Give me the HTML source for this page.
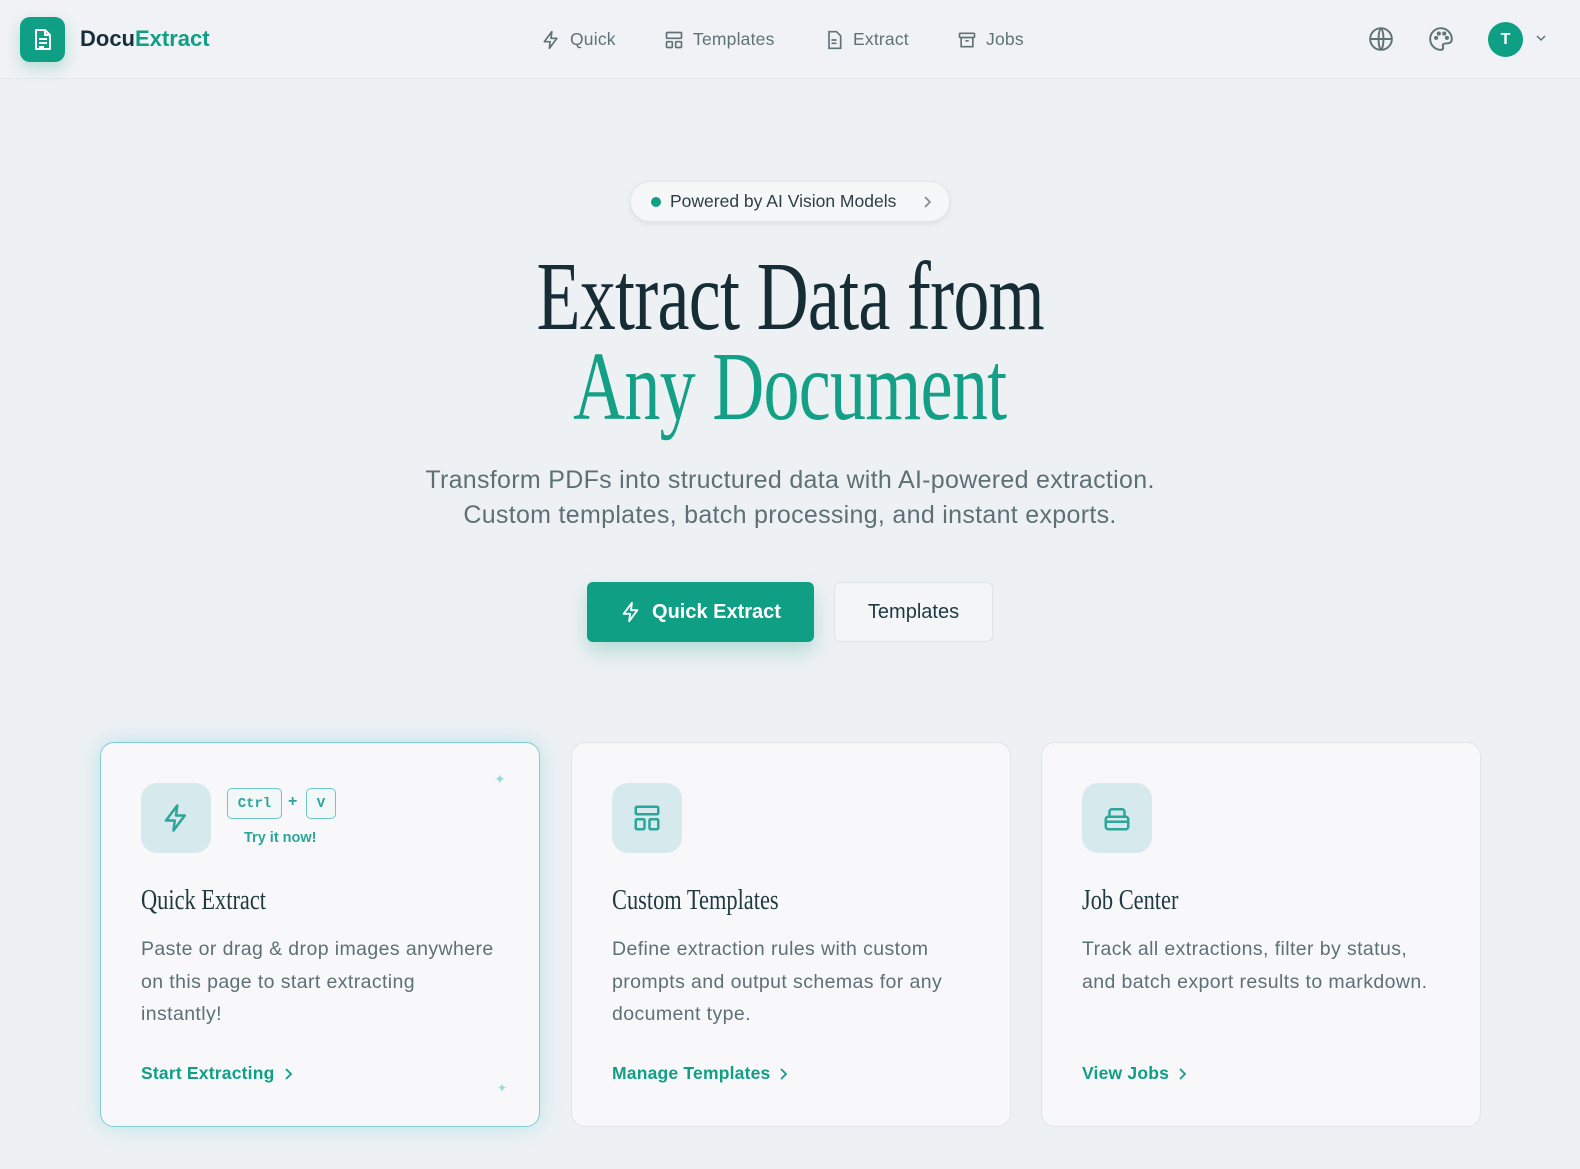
<!DOCTYPE html>
<html><head><meta charset="utf-8"><style>
*{box-sizing:border-box;margin:0;padding:0}
body{width:1580px;height:1169px;overflow:hidden;background:#eef1f4;font-family:"Liberation Sans",sans-serif;color:#1e3a40;position:relative}
.nav{position:absolute;left:0;top:0;width:1580px;height:79px;border-bottom:1px solid #e2e8eb;background:#f0f2f5}
.logo{position:absolute;left:20px;top:17px;width:45px;height:45px;border-radius:10px;background:#0f9f85;box-shadow:0 6px 14px rgba(15,159,133,.25)}
.brand{position:absolute;left:80px;top:26px;font-size:22px;font-weight:bold;color:#173039}
.brand span{color:#0f9f85}
.nl{position:absolute;top:29px;font-size:17.5px;color:#5f7377;display:flex;align-items:center;gap:9px;letter-spacing:.2px}
svg{display:block}
.pill{position:absolute;left:630px;top:181px;width:320px;height:41px;border-radius:21px;background:#f6f7f9;box-shadow:0 2px 6px rgba(0,0,0,.08);border:1px solid #e3e7ea;font-size:17.5px;color:#2c3e44}
.h{position:absolute;left:0;width:1580px;text-align:center;font-family:"Liberation Serif",serif;font-size:98px;line-height:1}
.h span{display:inline-block;transform:scaleX(.735);letter-spacing:-1px}
.sub{position:absolute;left:0;top:463px;width:1580px;text-align:center;font-size:25px;line-height:35px;color:#5d7075;letter-spacing:.3px}
.btn1{position:absolute;left:587px;top:582px;width:227px;height:60px;background:#0f9f85;border-radius:6px;color:#fff;font-size:20px;font-weight:bold;display:flex;align-items:center;justify-content:center;gap:10px;box-shadow:0 10px 20px rgba(15,159,133,.25)}
.btn2{position:absolute;left:834px;top:582px;width:159px;height:60px;background:#f3f5f7;border:1px solid #dde3e6;border-radius:6px;font-size:20px;color:#1e3a40;display:flex;align-items:center;justify-content:center}
.card{position:absolute;top:742px;width:440px;height:385px;background:#f8f8fb;border:1px solid #e0e5e8;border-radius:14px}
.card.a{border-color:#7fcfd3;box-shadow:0 0 22px rgba(90,200,210,.35)}
.ic{position:absolute;left:40px;top:40px;width:70px;height:70px;border-radius:16px;background:#d6e9ec;display:flex;align-items:center;justify-content:center}
.ct{position:absolute;left:40px;top:142px;font-family:"Liberation Serif",serif;font-size:28px;color:#1e3a40}
.ct span{display:inline-block;transform:scaleX(.8);transform-origin:left}
.cd{position:absolute;left:40px;top:190px;width:360px;font-size:19.5px;line-height:32.5px;color:#5d7075;letter-spacing:.4px}
.cl{position:absolute;left:40px;top:320px;font-size:17.5px;font-weight:bold;color:#0f9f85;display:flex;align-items:center;gap:8px;letter-spacing:.2px}
.kb{position:absolute;top:45px;height:31px;border:1px solid #6fc7c9;border-radius:5px;font-family:"Liberation Mono",monospace;font-size:14px;font-weight:bold;color:#2ca59a;display:flex;align-items:center;justify-content:center;background:#f2f7f8}
</style></head><body>
<div class="nav">
 <div class="logo"><svg width="45" height="45" viewBox="0 0 45 45" fill="none" stroke="#fff" stroke-width="2" stroke-linejoin="round"><path d="M16 13h9l5 5v14h-14z"/><path d="M25 13v5h5M19 22h8M19 26h8M19 30h5"/></svg></div>
 <div class="brand">Docu<span>Extract</span></div>
 <div class="nl" style="left:541px"><svg width="20" height="20" viewBox="0 0 24 24" fill="none" stroke="#5f7377" stroke-width="2" stroke-linejoin="round"><path d="M13 2L4 14h7l-1 8 9-12h-7z"/></svg>Quick</div>
 <div class="nl" style="left:664px"><svg width="20" height="20" viewBox="0 0 24 24" fill="none" stroke="#5f7377" stroke-width="2"><rect x="3" y="3" width="18" height="7" rx="1"/><rect x="3" y="14" width="7" height="7" rx="1"/><rect x="14" y="14" width="7" height="7" rx="1"/></svg>Templates</div>
 <div class="nl" style="left:824px"><svg width="20" height="20" viewBox="0 0 24 24" fill="none" stroke="#5f7377" stroke-width="2"><path d="M6 2h9l5 5v15H6z"/><path d="M9 12h6M9 16h6"/></svg>Extract</div>
 <div class="nl" style="left:957px"><svg width="20" height="20" viewBox="0 0 24 24" fill="none" stroke="#5f7377" stroke-width="2"><rect x="3" y="4" width="18" height="5" rx="1"/><path d="M5 9v11h14V9M10 13h4"/></svg>Jobs</div>
 <svg style="position:absolute;left:1368px;top:26px" width="26" height="26" viewBox="0 0 24 24" fill="none" stroke="#5f7377" stroke-width="1.8"><circle cx="12" cy="12" r="10"/><path d="M2 12h20M12 2c3 3 3 17 0 20M12 2c-3 3-3 17 0 20"/></svg>
 <svg style="position:absolute;left:1428px;top:26px" width="26" height="26" viewBox="0 0 24 24" fill="none" stroke="#5f7377" stroke-width="1.8"><path d="M12 2a10 10 0 1 0 0 20c1.5 0 2-1 2-2s-1-2 0-3 2-1 4-1 4-1 4-4c0-5-4.5-10-10-10z"/><circle cx="7.5" cy="11" r="1"/><circle cx="10" cy="7" r="1"/><circle cx="15" cy="7" r="1"/><circle cx="17.5" cy="11" r="1"/></svg>
 <div style="position:absolute;left:1488px;top:22px;width:35px;height:35px;border-radius:50%;background:#0f9f85;color:#fff;font-weight:bold;font-size:16px;display:flex;align-items:center;justify-content:center">T</div>
 <svg style="position:absolute;left:1534px;top:33px" width="14" height="10" viewBox="0 0 14 10" fill="none" stroke="#5f7377" stroke-width="1.5"><path d="M3 3l4 4 4-4"/></svg>
</div>
<div class="pill"><div style="position:absolute;left:20px;top:15px;width:10px;height:10px;border-radius:50%;background:#0f9f85"></div><div style="position:absolute;left:39px;top:9px">Powered by AI Vision Models</div><svg style="position:absolute;left:291px;top:12px" width="12" height="16" viewBox="0 0 12 16" fill="none" stroke="#7a8a8e" stroke-width="1.6"><path d="M3 3l5 5-5 5"/></svg></div>
<div class="h" style="top:248px;color:#172d36"><span>Extract Data from</span></div>
<div class="h" style="top:338px;color:#13a086"><span>Any Document</span></div>
<div class="sub">Transform PDFs into structured data with AI-powered extraction.<br>Custom templates, batch processing, and instant exports.</div>
<div class="btn1"><svg width="22" height="22" viewBox="0 0 24 24" fill="none" stroke="#fff" stroke-width="2" stroke-linejoin="round"><path d="M13 2L4 14h7l-1 8 9-12h-7z"/></svg>Quick Extract</div>
<div class="btn2">Templates</div>

<div class="card a" style="left:100px">
 <div class="ic"><svg width="30" height="30" viewBox="0 0 24 24" fill="none" stroke="#2ca59a" stroke-width="2" stroke-linejoin="round"><path d="M13 2L4 14h7l-1 8 9-12h-7z"/></svg></div>
 <div class="kb" style="left:126px;width:55px">Ctrl</div>
 <div style="position:absolute;left:187px;top:50px;font-weight:bold;color:#2ca59a;font-size:16px">+</div>
 <div class="kb" style="left:205px;width:30px">V</div>
 <div style="position:absolute;left:143px;top:87px;font-size:14.5px;font-weight:bold;color:#2ca59a">Try it now!</div>
 <div style="position:absolute;left:393px;top:28px;color:#9ad8da;font-size:14px">✦</div>
 <div style="position:absolute;left:396px;top:338px;color:#9ad8da;font-size:12px">✦</div>
 <div class="ct"><span>Quick Extract</span></div>
 <div class="cd">Paste or drag &amp; drop images anywhere on this page to start extracting instantly!</div>
 <div class="cl">Start Extracting <svg width="12" height="14" viewBox="0 0 12 14" fill="none" stroke="#0f9f85" stroke-width="1.8"><path d="M3 2l5 5-5 5"/></svg></div>
</div>
<div class="card" style="left:571px">
 <div class="ic"><svg width="30" height="30" viewBox="0 0 24 24" fill="none" stroke="#2ca59a" stroke-width="2"><rect x="3" y="3" width="18" height="6" rx="1"/><rect x="3" y="13" width="7" height="8" rx="1"/><rect x="14" y="13" width="7" height="8" rx="1"/></svg></div>
 <div class="ct"><span>Custom Templates</span></div>
 <div class="cd">Define extraction rules with custom prompts and output schemas for any document type.</div>
 <div class="cl">Manage Templates <svg width="12" height="14" viewBox="0 0 12 14" fill="none" stroke="#0f9f85" stroke-width="1.8"><path d="M3 2l5 5-5 5"/></svg></div>
</div>
<div class="card" style="left:1041px">
 <div class="ic"><svg width="30" height="30" viewBox="0 0 24 24" fill="none" stroke="#2ca59a" stroke-width="2"><rect x="3" y="11" width="18" height="10" rx="2"/><path d="M6 11V7a2 2 0 0 1 2-2h8a2 2 0 0 1 2 2v4M3 15h18"/></svg></div>
 <div class="ct"><span>Job Center</span></div>
 <div class="cd" style="width:352px">Track all extractions, filter by status, and batch export results to markdown.</div>
 <div class="cl">View Jobs <svg width="12" height="14" viewBox="0 0 12 14" fill="none" stroke="#0f9f85" stroke-width="1.8"><path d="M3 2l5 5-5 5"/></svg></div>
</div>
</body></html>
